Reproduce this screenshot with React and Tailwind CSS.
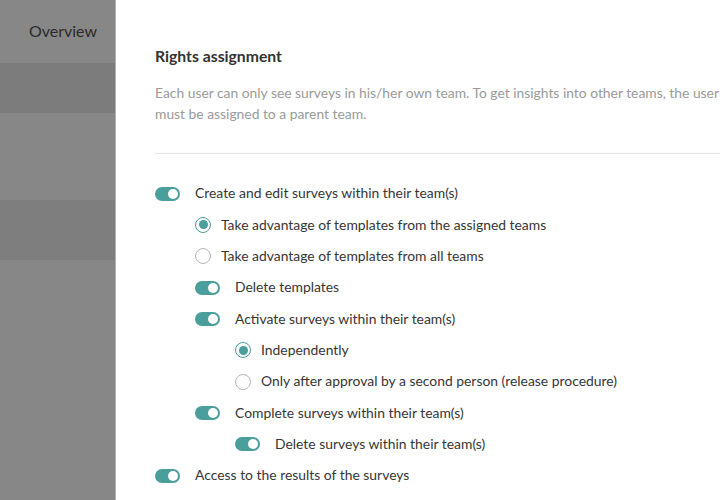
import React from "react";

function Toggle() {
  return (
    <span className="relative inline-flex h-[14px] w-[25px] shrink-0 items-center rounded-full bg-[#4a9e9b]">
      <span className="absolute right-[2px] h-[10px] w-[10px] rounded-full bg-white" />
    </span>
  );
}

function Radio({ checked }) {
  return checked ? (
    <span className="flex h-[16px] w-[16px] shrink-0 items-center justify-center rounded-full border-[1.5px] border-[#4a9e9b] bg-white">
      <span className="h-[9px] w-[9px] rounded-full bg-[#4a9e9b]" />
    </span>
  ) : (
    <span className="h-[16px] w-[16px] shrink-0 rounded-full border border-[#b5b5b5] bg-white" />
  );
}

const rows = [
  { level: 0, type: "toggle", label: "Create and edit surveys within their team(s)" },
  { level: 1, type: "radio", checked: true, label: "Take advantage of templates from the assigned teams" },
  { level: 1, type: "radio", checked: false, label: "Take advantage of templates from all teams" },
  { level: 1, type: "toggle", label: "Delete templates" },
  { level: 1, type: "toggle", label: "Activate surveys within their team(s)" },
  { level: 2, type: "radio", checked: true, label: "Independently" },
  { level: 2, type: "radio", checked: false, label: "Only after approval by a second person (release procedure)" },
  { level: 1, type: "toggle", label: "Complete surveys within their team(s)" },
  { level: 2, type: "toggle", label: "Delete surveys within their team(s)" },
  { level: 0, type: "toggle", label: "Access to the results of the surveys" },
];

const indent = ["pl-0", "pl-[40px]", "pl-[80px]"];

export default function App() {
  return (
    <div
      className="flex h-[500px] w-[720px] overflow-hidden bg-white"
      style={{ fontFamily: "Lato, 'Open Sans', sans-serif" }}
    >
      <aside className="flex w-[115px] shrink-0 flex-col bg-[#878787]">
        <div className="flex h-[63px] items-center justify-end pr-[18px] pb-[1px] text-[16px] text-[#2b2b2b]">
          Overview
        </div>
        <div className="h-[50px] bg-[#7c7c7c]" />
        <div className="h-[87px]" />
        <div className="h-[60px] bg-[#7e7e7e]" />
        <div className="flex-1" />
      </aside>
      <div className="w-px shrink-0 bg-[#b0b0b0]" />
      <main className="min-w-0 flex-1 pl-[39px]">
        <h1 className="mt-[46px] text-[15.75px] font-bold leading-[20px] text-[#333333]">
          Rights assignment
        </h1>
        <p className="mt-[16px] w-[590px] text-[13.85px] leading-[21px] text-[#9a9a9a]">
          Each user can only see surveys in his/her own team. To get insights into other teams, the user must be assigned to a parent team.
        </p>
        <div className="mt-[29px] h-px w-[600px] bg-[#e6e6e6]" />
        <ul className="mt-[24px]">
          {rows.map((r, i) => (
            <li
              key={i}
              className={`flex h-[31.333px] items-center whitespace-nowrap text-[13.9px] text-[#363636] ${indent[r.level]}`}
            >
              {r.type === "toggle" ? (
                <>
                  <Toggle />
                  <span className="ml-[15px]">{r.label}</span>
                </>
              ) : (
                <>
                  <Radio checked={r.checked} />
                  <span className="ml-[10px]">{r.label}</span>
                </>
              )}
            </li>
          ))}
        </ul>
      </main>
    </div>
  );
}
